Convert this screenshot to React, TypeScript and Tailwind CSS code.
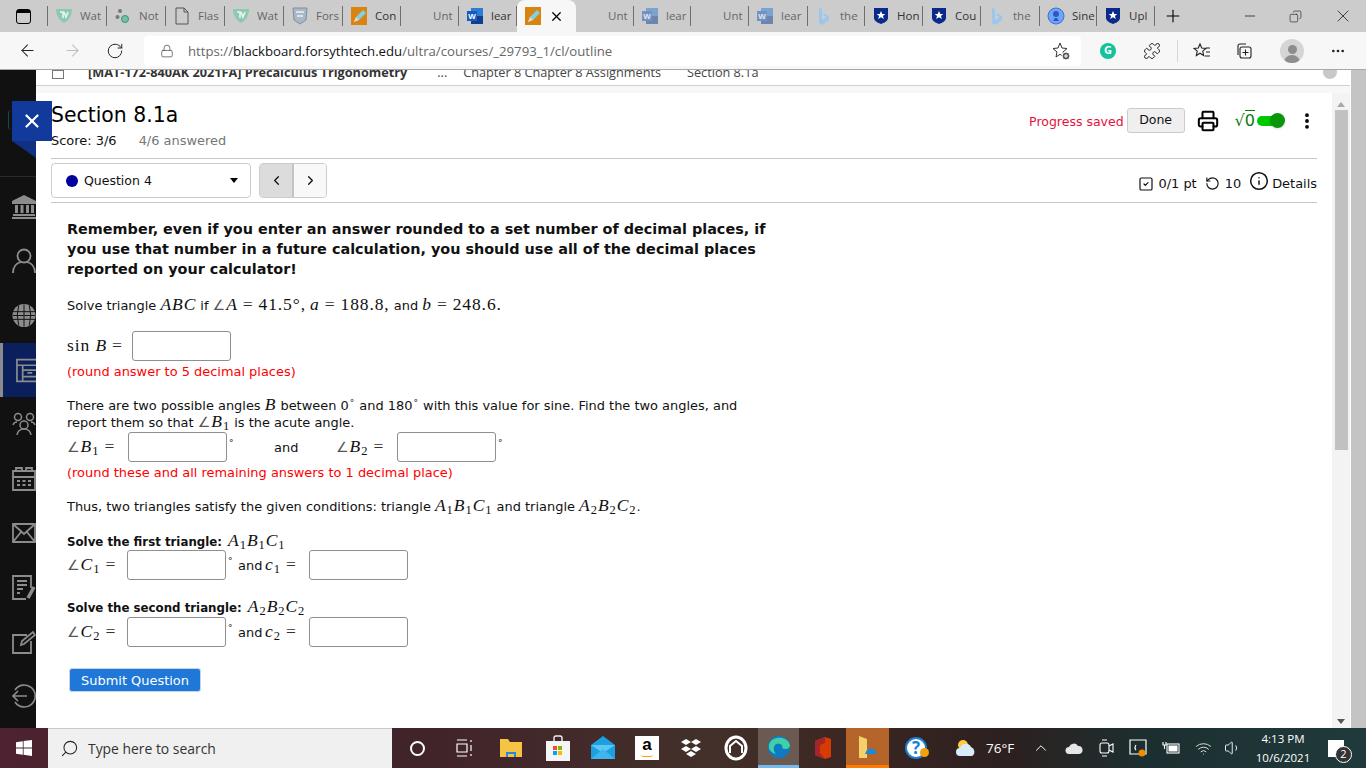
import { ReactNode } from 'react';
import {
  ArrowLeft, ArrowRight, RotateCw, Lock, Puzzle, MoreHorizontal, Plus, X, Minus, Copy,
  ChevronLeft, ChevronRight, Printer, MoreVertical, SquareCheck, RotateCcw, Info, Search, ChevronUp, Volume1, Wifi,
} from 'lucide-react';

const UI = { fontFamily: '"Open Sans", sans-serif' };
const BODY = { fontFamily: '"DejaVu Sans", sans-serif' };
const MATH = { fontFamily: '"Liberation Serif", serif' };

function Shield({ color = '#0a2a8a' }: { color?: string }) {
  return (
    <svg width="16" height="18" viewBox="0 0 16 18">
      <path d="M1 1h14v10c0 3-4 5-7 6-3-1-7-3-7-6z" fill={color} />
      <path d="M8 4l1.3 3h3l-2.4 2 1 3L8 10.200 5.100 12l1-3-2.400-2h3z" fill="#fff" />
    </svg>
  );
}

function PencilIcon() {
  return (
    <svg width="16" height="18" viewBox="0 0 16 18">
      <rect width="16" height="18" fill="#d98410" />
      <path d="M3 15l2-5 7-7 3 3-7 7z" fill="#7fd0e8" />
      <path d="M3 15l2-5 3 3z" fill="#f2d6b0" />
    </svg>
  );
}

function WordIcon({ faded }: { faded?: boolean }) {
  return (
    <svg width="16" height="18" viewBox="0 0 16 18" className={faded ? 'opacity-50' : ''}>
      <rect x="4" y="1" width="12" height="16" fill="#2b7cd3" />
      <rect x="4" y="9" width="12" height="8" fill="#103f91" />
      <rect x="0" y="4" width="10" height="10" fill="#185abd" />
      <text x="5" y="12" fontSize="8" fontWeight="700" textAnchor="middle" fill="#fff" fontFamily="Liberation Sans">W</text>
    </svg>
  );
}

function TvIcon() {
  return (
    <svg width="18" height="16" viewBox="0 0 18 16">
      <path d="M1 1h16c0 7-4 12-8 14C5 13 1 8 1 1z" fill="#8cc9ae" />
      <path d="M5 4h3v6M9 4l2 5 2-5" fill="none" stroke="#e8f5ee" strokeWidth="1.600" />
    </svg>
  );
}

function BingIcon() {
  return (
    <svg width="12" height="18" viewBox="0 0 12 18">
      <path d="M1 1l3 1v11l5-3-3-1-1-3 6 3v4l-7 5-3-2z" fill="#9cc6ea" />
    </svg>
  );
}

type TabDef = { label: string; icon?: ReactNode; w: string; dim?: boolean };

const blank = <span className="block h-[18px] w-4" />;

const tabs: TabDef[] = [
  { label: 'Wat', w: 'w-[59px]', icon: <TvIcon />, dim: true },
  {
    label: 'Not', w: 'w-[59px]', dim: true,
    icon: (
      <svg width="16" height="16" viewBox="0 0 16 16">
        <circle cx="5" cy="3" r="2" fill="#777" /><circle cx="2.500" cy="9" r="2" fill="#777" />
        <circle cx="10" cy="11" r="3.500" fill="#6cc3a8" stroke="#3f8f7a" />
      </svg>
    ),
  },
  {
    label: 'Flas', w: 'w-[59px]', dim: true,
    icon: (
      <svg width="14" height="18" viewBox="0 0 14 18" fill="none" stroke="#555" strokeWidth="1">
        <path d="M1 1h8l4 4v12H1zM9 1v4h4" />
      </svg>
    ),
  },
  { label: 'Wat', w: 'w-[59px]', icon: <TvIcon />, dim: true },
  {
    label: 'Fors', w: 'w-[59px]', dim: true,
    icon: (
      <svg width="16" height="18" viewBox="0 0 16 18">
        <path d="M1 1h14l-1 12-6 4-6-4z" fill="#a9b7c6" stroke="#7f8fa3" />
        <path d="M4 5h8M5 9h6" stroke="#eef2f6" strokeWidth="1.500" />
      </svg>
    ),
  },
  { label: 'Con', w: 'w-[58px]', icon: <PencilIcon /> },
  { label: 'Unt', w: 'w-[58px]', dim: true, icon: blank },
  { label: 'lear', w: 'w-[58px]', icon: <WordIcon /> },
];

const tabsAfter: TabDef[] = [
  { label: 'Unt', w: 'w-[58px]', dim: true, icon: blank },
  { label: 'lear', w: 'w-[57px]', dim: true, icon: <WordIcon faded /> },
  { label: 'Unt', w: 'w-[58px]', dim: true, icon: blank },
  { label: 'lear', w: 'w-[59px]', dim: true, icon: <WordIcon faded /> },
  { label: 'the', w: 'w-[57px]', dim: true, icon: <BingIcon /> },
  { label: 'Hon', w: 'w-[58px]', icon: <Shield /> },
  { label: 'Cou', w: 'w-[58px]', icon: <Shield /> },
  { label: 'the', w: 'w-[59px]', dim: true, icon: <BingIcon /> },
  {
    label: 'Sine', w: 'w-[57px]',
    icon: (
      <svg width="18" height="18" viewBox="0 0 18 18">
        <circle cx="9" cy="9" r="8" fill="#6ea5f5" stroke="#3f6fd8" />
        <circle cx="9" cy="7" r="3" fill="#2f55c8" /><path d="M6 14h6l-2-3H8z" fill="#2f55c8" />
      </svg>
    ),
  },
  { label: 'Upl', w: 'w-[58px]', icon: <Shield /> },
];

function Tab({ tab }: { tab: TabDef }) {
  return (
    <div className={`${tab.w} flex h-5 shrink-0 items-center gap-[7px] overflow-hidden border-r border-[#6f6f6f] pl-[7px]`}>
      <span className="flex w-[18px] shrink-0 justify-center">{tab.icon}</span>
      <span className={`text-[11.500px] whitespace-nowrap ${tab.dim ? 'text-[#666]' : 'text-[#333]'}`}>{tab.label}</span>
    </div>
  );
}

function BrowserChrome() {
  return (
    <div style={UI} className="shrink-0">
      <div className="flex h-8 items-center bg-[#cccccc]">
        <div className="flex w-[47px] shrink-0 justify-center pr-[1px]">
          <div className="h-[15px] w-[15px] rounded-[3px] border-[1.500px] border-black">
            <div className="h-[3px] bg-black" />
          </div>
        </div>
        <div className="flex h-5 items-center border-l border-[#6f6f6f]" />
        {tabs.map((t, i) => <Tab key={i} tab={t} />)}
        <div className="flex h-8 w-[59px] shrink-0 items-center justify-between self-start rounded-t-lg bg-[#f7f7f7] pl-2 pr-[12px]">
          <PencilIcon />
          <X size={15} strokeWidth={2} className="text-black" />
        </div>
        {tabsAfter.map((t, i) => <Tab key={i} tab={t} />)}
        <Plus size={20} strokeWidth={1.300} className="ml-[8px] text-black" />
        <div className="ml-auto flex items-center gap-[31px] pr-[13px] text-[#222]">
          <Minus size={16} strokeWidth={1.200} />
          <Copy size={13} strokeWidth={1.200} className="scale-x-[-1]" />
          <X size={20} strokeWidth={1} />
        </div>
      </div>

      <div className="flex h-[38px] items-center border-b border-[#a8a8a8] bg-[#f7f7f7]">
        <div className="flex w-[144px] shrink-0 items-center pl-[18px]">
          <ArrowLeft size={19} strokeWidth={1.300} className="text-[#222]" />
          <ArrowRight size={19} strokeWidth={1.300} className="ml-[26px] text-[#bdbdbd]" />
          <RotateCw size={18} strokeWidth={1.300} className="ml-[24px] text-[#222]" />
        </div>
        <div className="flex h-[30px] w-[937px] shrink-0 items-center rounded-[4px] bg-white pl-4 pr-[10px]">
          <Lock size={14} strokeWidth={1.200} className="text-[#444]" />
          <span className="ml-[14px] pt-[2px] text-[13.200px] text-[#666]">
            https://<span className="text-[#111]">blackboard.forsythtech.edu</span>/ultra/courses/_29793_1/cl/outline
          </span>
          <svg width="20" height="20" viewBox="0 0 20 20" className="ml-auto" fill="none" stroke="#333" strokeWidth="1">
            <path d="M9 2l2 5 5 .5-4 3.500 1 5-4-2.700-4 2.700 1-5-4-3.500 5-.5z" />
            <circle cx="15" cy="15" r="4" fill="#555" stroke="#fff" />
            <path d="M13 15h4M15 13v4" stroke="#fff" />
          </svg>
        </div>
        <div className="flex flex-1 items-center text-[#222]">
          <span className="ml-[19px] flex h-4 w-4 items-center justify-center rounded-full bg-[#15c39a] text-[11px] font-bold text-white">G</span>
          <Puzzle size={18} strokeWidth={1.300} className="ml-[27px]" />
          <div className="ml-[16px] h-[22px] w-px bg-[#d8d8d8]" />
          <svg width="18" height="18" viewBox="0 0 18 18" className="ml-[15px]" fill="none" stroke="#222" strokeWidth="1.100">
            <path d="M7 2l1.700 4 4.300.4-3.300 2.800 1 4.300L7 11.200 3.300 13.500l1-4.300L1 6.400 5.300 6zM13 6h4M13 10h4M12 14h5" />
          </svg>
          <svg width="18" height="18" viewBox="0 0 18 18" className="ml-[24px]" fill="none" stroke="#222" strokeWidth="1.100">
            <path d="M3 13V4q0-2 2-2h6" /><rect x="5" y="5" width="11" height="11" rx="2" /><path d="M10.500 7.500v6M7.500 10.500h6" />
          </svg>
          <span className="ml-[27px] flex h-[24px] w-[24px] flex-col items-center justify-end overflow-hidden rounded-full bg-[#d5d5d5]">
            <span className="h-[9px] w-[9px] rounded-full bg-[#8d8d8d]" />
            <span className="mt-[1px] h-[8px] w-[16px] rounded-t-full bg-[#8d8d8d]" />
          </span>
          <MoreHorizontal size={16} strokeWidth={2} className="ml-[26px]" />
        </div>
      </div>
    </div>
  );
}

const GRAY = '#8c8c8c';

const sideIcons: ReactNode[] = [
  <svg width="24" height="24" viewBox="0 0 24 24" fill={GRAY}>
    <path d="M12 0L0 6v3h24V6z" /><path d="M3 10h3v8H3zM8.500 10h3v8h-3zM14 10h3v8h-3zM19 10h3v8h-3zM1 19h22v2H1zM0 22h24v2H0z" />
  </svg>,
  <svg width="24" height="26" viewBox="0 0 24 26" fill="none" stroke={GRAY} strokeWidth="1.800">
    <circle cx="12" cy="8" r="6.500" /><path d="M1 25q0-9 8-11M23 25q0-9-8-11" />
  </svg>,
  <svg width="25" height="25" viewBox="0 0 25 25">
    <circle cx="12.500" cy="12.500" r="12" fill={GRAY} />
    <path d="M1 8.500h23M1 12.500h23M1 16.500h23M12.500 1v23M7 2q-3 10 0 21M18 2q3 10 0 21" fill="none" stroke="#111" strokeWidth="1" />
  </svg>,
  <svg width="21" height="25" viewBox="0 0 21 25" fill="none" stroke={GRAY} strokeWidth="1.800">
    <path d="M21 1H1v23h20M1 7h20M7 7v17M7 12h14M7 19h14M12 15h5" />
  </svg>,
  <svg width="24" height="24" viewBox="0 0 24 24" fill="none" stroke={GRAY} strokeWidth="1.500">
    <circle cx="6" cy="5" r="3.500" /><circle cx="18" cy="5" r="3.500" /><circle cx="12" cy="13" r="4" />
    <path d="M1 13q1-3 4-3M23 13q-1-3-4-3M5 23q1-6 7-6t7 6" />
  </svg>,
  <svg width="24" height="24" viewBox="0 0 24 24" fill="none" stroke={GRAY} strokeWidth="1.800">
    <path d="M1 4h22v19H1zM1 10h22M4 4V1h6v3M14 4V1h6v3" />
    <path d="M5 14h3M10.500 14h3M16 14h3M5 18h3M10.500 18h3M16 18h3" strokeWidth="2.200" />
  </svg>,
  <svg width="24" height="20" viewBox="0 0 24 20" fill="none" stroke={GRAY} strokeWidth="1.800">
    <path d="M1 1h22v18H1zM1 1l11 10L23 1M1 19l8-10M23 19l-8-10" />
  </svg>,
  <svg width="24" height="25" viewBox="0 0 24 25" fill="none" stroke={GRAY} strokeWidth="1.800">
    <path d="M19 13V1H1v23h13M5 6h10M5 10h10M5 14h6M5 18h3" />
    <path d="M16 23l6-11" strokeWidth="3.500" />
  </svg>,
  <svg width="24" height="24" viewBox="0 0 24 24" fill="none" stroke={GRAY} strokeWidth="1.800">
    <path d="M15 5H1v18h18V11" /><path d="M9 15l1-4 11-9 2 3-11 9z" />
  </svg>,
  <svg width="24" height="24" viewBox="0 0 24 24" fill="none" stroke={GRAY} strokeWidth="1.600">
    <path d="M3 6a11 11 0 1 1 0 12M1 12h14M6 7l-5 5 5 5" />
  </svg>,
];

function Sidebar() {
  return (
    <div className="flex w-[36px] shrink-0 flex-col overflow-hidden bg-[#111111] pt-[106px]">
      <div className="mb-[3px] h-px bg-[#2a2a2a]" />
      {sideIcons.map((r, i) => (
        <div
          key={i}
          className={`flex h-[54.300px] shrink-0 items-center ${i === 3 ? 'border-l-[3px] border-[#8c8c8c] bg-[#0b1f5c] pl-[13px]' : 'pl-[12px]'}`}
        >
          {r}
        </div>
      ))}
    </div>
  );
}

function V({ children }: { children: ReactNode }) {
  return <i style={MATH} className="text-[17.500px] leading-[10px] font-normal tracking-[0.9px]">{children}</i>;
}

function N({ children }: { children: ReactNode }) {
  return <span style={MATH} className="text-[17.500px] leading-[10px] font-normal tracking-[0.9px]">{children}</span>;
}

function Sb({ children }: { children: ReactNode }) {
  return <sub style={MATH} className="mr-[1px] text-[12.500px] leading-[0] font-normal">{children}</sub>;
}

function Eq({ children }: { children?: ReactNode }) {
  return (
    <span style={MATH} className="text-[17.500px] leading-[10px] font-normal tracking-[0.9px]">
      <span className="mx-[5px] text-[#333]">=</span>{children}
    </span>
  );
}

const Ang = () => <span style={BODY} className="mr-[1px] text-[14px] leading-[10px] font-normal text-[#555]">∠</span>;

function Box({ w = 'w-[99px]' }: { w?: string }) {
  return <input className={`${w} h-[30px] shrink-0 rounded-[3px] border border-[#8f8f8f] bg-white`} />;
}

function Deg({ w }: { w: string }) {
  return <span className={`${w} -mt-[8px] shrink-0 pl-[2px] text-[9px] leading-none`}>°</span>;
}

const SmallDeg = () => <sup className="mx-[1px] text-[9px] leading-[0]">°</sup>;

function Label({ w, children }: { w: string; children: ReactNode }) {
  return <span className={`${w} shrink-0 whitespace-nowrap`}>{children}</span>;
}

function MainPanel() {
  return (
    <div className="flex min-w-0 flex-1 flex-col bg-white">
      <div className="flex h-[16px] shrink-0 items-end overflow-hidden border-b border-[#cfcfcf] pb-[6px] pl-[16px] text-[12.700px] leading-none whitespace-nowrap text-[#444]" style={UI}>
        <span className="h-[9px] w-[12px] shrink-0 border border-[#777]" />
        <b className="ml-[24px] text-[#333]">[MAT-172-840AK 2021FA] Precalculus Trigonometry</b>
        <span className="ml-[30px]">...</span>
        <span className="ml-[16px]">Chapter 8 Chapter 8 Assignments</span>
        <span className="ml-[26px]">Section 8.1a</span>
        <span className="ml-auto mr-[13px] h-[14px] w-[14px] shrink-0 rounded-full bg-[#c8c8c8]" />
      </div>
      <div className="h-[7px] shrink-0 bg-[#f7f7f7]" />

      <div className="flex min-h-0 flex-1">
        <div style={BODY} className="w-[1281px] shrink-0 pl-[15px] text-[#111]">
          <div className="flex h-[66px] items-start justify-between border-b border-[#c8c8c8]">
            <div>
              <h1 className="mt-[9px] text-[20.400px] leading-[26px] font-normal text-black">Section 8.1a</h1>
              <div className="mt-[5px] text-[12.950px] leading-4">
                Score: 3/6 <span className="ml-[18px] text-[#777]">4/6 answered</span>
              </div>
            </div>
            <div className="mt-[15px] flex items-center">
              <span className="pt-[3px] text-[12.500px] text-[#e5103a]">Progress saved</span>
              <button className="ml-[3px] h-[25px] w-[58px] rounded-[3px] border border-[#ccc] bg-[#efefef] text-[12.500px]">Done</button>
              <Printer size={22} strokeWidth={2.200} className="ml-[12px] text-black" />
              <span className="ml-[16px] text-[16px] leading-none text-[#0a7a0a]">√<span className="border-t border-[#0a7a0a]">0</span></span>
              <span className="ml-[2px] flex items-center">
                <span className="h-[10px] w-[23px] rounded-full bg-[#00c800]" />
                <span className="-ml-[10px] h-[15px] w-[15px] rounded-full bg-[#0a960a] shadow" />
              </span>
              <MoreVertical size={20} strokeWidth={2.600} className="ml-[12px] text-black" />
            </div>
          </div>

          <div className="flex h-[44px] items-center justify-between border-b border-[#c8c8c8]">
            <div className="flex items-center">
              <div className="flex h-[35px] w-[200px] items-center rounded-[4px] border border-[#ccc] pl-[14px] pr-[12px] text-[12.500px]">
                <span className="mr-[6px] h-3 w-3 rounded-full bg-[#00009c]" />
                <span className="pt-[2px]">Question 4</span>
                <span className="ml-auto h-0 w-0 border-x-[4px] border-t-[5px] border-x-transparent border-t-black" />
              </div>
              <div className="ml-2 flex h-[35px] w-[68px] overflow-hidden rounded-[4px] border border-[#ccc]">
                <span className="flex w-[34px] items-center justify-center border-r-2 border-[#c4c4c4] bg-[#dcdcdc]"><ChevronLeft size={15} strokeWidth={2} /></span>
                <span className="flex flex-1 items-center justify-center bg-[#f8f8f8]"><ChevronRight size={15} strokeWidth={2} /></span>
              </div>
            </div>
            <div className="flex items-center pt-[6px] text-[12.950px]">
              <SquareCheck size={16} strokeWidth={1.800} className="mr-[4px]" />
              <span>0/1 pt</span>
              <RotateCcw size={15} strokeWidth={1.800} className="ml-[8px] mr-[5px]" />
              <span>10</span>
              <Info size={20} strokeWidth={1.800} className="ml-[8px] mr-[3px] -translate-y-[3px]" />
              <span>Details</span>
            </div>
          </div>

          <div className="pl-[16px] text-[12.950px] leading-[17px]">
            <p className="mt-[16px] w-[708px] text-[14.400px] leading-[20px] font-bold">
              Remember, even if you enter an answer rounded to a set number of decimal places, if you use that number in a future calculation, you should use all of the decimal places reported on your calculator!
            </p>
            <p className="mt-[18px]">
              Solve triangle <V>ABC</V> if <Ang /><V>A</V><Eq>41.5°,</Eq> <V>a</V><Eq>188.8,</Eq> and <V>b</V><Eq>248.6.</Eq>
            </p>
            <div className="mt-[17px] flex h-[30px] items-center">
              <Label w="w-[65px]"><N>sin </N><V>B</V><Eq /></Label>
              <Box />
            </div>
            <p className="mt-[2px] text-[#ff0000]">(round answer to 5 decimal places)</p>
            <p className="mt-[17px] w-[690px]">
              There are two possible angles <V>B</V> between 0<SmallDeg /> and 180<SmallDeg /> with this value for sine. Find the two angles, and report them so that <Ang /><V>B</V><Sb>1</Sb> is the acute angle.
            </p>
            <div className="mt-[1px] flex h-[30px] items-center">
              <Label w="w-[61px]"><Ang /><V>B</V><Sb>1</Sb><Eq /></Label>
              <Box />
              <Deg w="w-[47px]" />
              <Label w="w-[62px]">and</Label>
              <Label w="w-[61px]"><Ang /><V>B</V><Sb>2</Sb><Eq /></Label>
              <Box />
              <Deg w="w-[8px]" />
            </div>
            <p className="mt-[2px] text-[#ff0000]">(round these and all remaining answers to 1 decimal place)</p>
            <p className="mt-[17px]">
              Thus, two triangles satisfy the given conditions: triangle <V>A</V><Sb>1</Sb><V>B</V><Sb>1</Sb><V>C</V><Sb>1</Sb> and triangle <V>A</V><Sb>2</Sb><V>B</V><Sb>2</Sb><V>C</V><Sb>2</Sb>.
            </p>
            <p className="mt-[19px] text-[11.800px] font-bold">Solve the first triangle: <span className="ml-[2px]"><V>A</V><Sb>1</Sb><V>B</V><Sb>1</Sb><V>C</V><Sb>1</Sb></span></p>
            <div className="-mt-[1px] flex h-[30px] items-center">
              <Label w="w-[60px]"><Ang /><V>C</V><Sb>1</Sb><Eq /></Label>
              <Box />
              <Deg w="w-[12px]" />
              <Label w="w-[27px]">and</Label>
              <Label w="w-[44px]"><V>c</V><Sb>1</Sb><Eq /></Label>
              <Box />
            </div>
            <p className="mt-[20px] text-[11.800px] font-bold">Solve the second triangle: <span className="ml-[2px]"><V>A</V><Sb>2</Sb><V>B</V><Sb>2</Sb><V>C</V><Sb>2</Sb></span></p>
            <div className="flex h-[30px] items-center">
              <Label w="w-[60px]"><Ang /><V>C</V><Sb>2</Sb><Eq /></Label>
              <Box />
              <Deg w="w-[12px]" />
              <Label w="w-[27px]">and</Label>
              <Label w="w-[44px]"><V>c</V><Sb>2</Sb><Eq /></Label>
              <Box />
            </div>
            <button className="mt-[21px] ml-[2px] h-[24px] w-[132px] rounded-[3px] border border-[#c4d4ea] bg-[#1f78d8] text-[12.950px] text-white">Submit Question</button>
          </div>
        </div>

        <div className="w-[15px] shrink-0" />
        <div className="flex w-[18px] shrink-0 flex-col items-center bg-[#f3f3f3] pt-[9px]">
          <span className="h-0 w-0 border-x-[4px] border-b-[5px] border-x-transparent border-b-[#a8a8a8]" />
          <span className="mt-[3px] h-[340px] w-[13px] bg-[#c1c1c1]" />
          <span className="mt-auto mb-[4px] h-0 w-0 border-x-[4px] border-t-[5px] border-x-transparent border-t-[#555]" />
        </div>
      </div>
    </div>
  );
}

function Slot({ w, children, bg }: { w: string; children?: ReactNode; bg?: string }) {
  return <div className={`${w} ${bg ?? ''} flex h-10 shrink-0 items-center justify-center`}>{children}</div>;
}

function Taskbar() {
  return (
    <div style={UI} className="flex h-10 shrink-0 items-center bg-[linear-gradient(90deg,#4e2230_0%,#41232a_30%,#43302a_52%,#3b2622_62%,#2c2020_74%,#1c2f30_84%,#203a3c_100%)] text-white">
      <Slot w="w-12">
        <svg width="16" height="16" viewBox="0 0 16 16" fill="#fff">
          <path d="M0 2.200l6.800-1v6.300H0zM7.600 1.100L16 0v7.500H7.600zM0 8.400h6.800v6.400l-6.800-1zM7.600 8.400H16V16l-8.400-1.200z" />
        </svg>
      </Slot>
      <div className="flex h-10 w-[344px] shrink-0 items-center border-t border-[#c9c9c9] bg-[#f0f0f0] pl-[12px] text-[13.900px] text-[#333]">
        <Search size={19} strokeWidth={1.300} className="scale-x-[-1] text-[#222]" />
        <span className="ml-[9px] pt-[2px]">Type here to search</span>
      </div>
      <Slot w="w-[50px]"><span className="h-[15px] w-[15px] rounded-full border-[2.500px] border-white" /></Slot>
      <Slot w="w-[44px]">
        <svg width="16" height="18" viewBox="0 0 16 18" fill="none" stroke="#fff" strokeWidth="1.200">
          <path d="M1 1h10M1 17h10M1 5h10v8H1zM15 1v2M15 6v6M15 15v2" />
        </svg>
      </Slot>
      <Slot w="w-[50px]">
        <svg width="22" height="20" viewBox="0 0 22 20">
          <path d="M0 1h8l2 3h12v15H0z" fill="#f6c344" /><path d="M6 14h10v5h-2v-3H8v3H6z" fill="#2b88d8" />
        </svg>
      </Slot>
      <Slot w="w-[44px]">
        <svg width="24" height="26" viewBox="0 0 24 26">
          <path d="M8 7V3q0-2 2-2h4q2 0 2 2v4" fill="none" stroke="#eee" strokeWidth="1.400" />
          <rect y="6" width="24" height="20" fill="#f5f5f5" />
          <rect x="7" y="11" width="4" height="4" fill="#f25022" /><rect x="12" y="11" width="4" height="4" fill="#7fba00" />
          <rect x="7" y="16" width="4" height="4" fill="#00a4ef" /><rect x="12" y="16" width="4" height="4" fill="#ffb900" />
        </svg>
      </Slot>
      <Slot w="w-[46px]">
        <svg width="24" height="24" viewBox="0 0 24 24">
          <path d="M0 9L12 0l12 9v14H0z" fill="#1ba1e2" /><path d="M0 9l12 8 12-8z" fill="#5cc8f5" /><path d="M0 23l12-10 12 10z" fill="#3fb4ee" />
        </svg>
      </Slot>
      <Slot w="w-[42px]">
        <div className="flex h-[24px] w-[24px] flex-col items-center bg-white text-black" style={{ fontFamily: '"Liberation Sans", sans-serif' }}>
          <span className="text-[17px] leading-[18px] font-bold">a</span>
          <span className="h-[3px] w-[12px] rounded-b-full border-b border-[#f90]" />
        </div>
      </Slot>
      <Slot w="w-[46px]">
        <svg width="22" height="20" viewBox="0 0 22 20" fill="#fff">
          <path d="M6 1l5 3-5 3-5-3zM16 1l5 3-5 3-5-3zM6 8l5 3-5 3-5-3zM16 8l5 3-5 3-5-3zM11 13l5 3-5 3-5-3z" />
        </svg>
      </Slot>
      <Slot w="w-[44px]">
        <svg width="24" height="26" viewBox="0 0 24 26" fill="none" stroke="#fff" strokeWidth="3">
          <ellipse cx="12" cy="13" rx="10" ry="11" /><path d="M6 18V11l6-5 6 5v7" strokeWidth="2" />
        </svg>
      </Slot>
      <Slot w="w-[41px]" bg="bg-[#6a5a52] border-b-[3px] border-[#76b9ed]">
        <svg width="24" height="24" viewBox="0 0 24 24">
          <circle cx="12" cy="12" r="11" fill="#0f7ac4" /><path d="M2 10C4 1 20 0 23 10c0 4-5 5-8 3 2-2-2-6-6-4-3 2-3 7 0 10-4-1-8-4-7-9z" fill="#3fd0a8" />
        </svg>
      </Slot>
      <Slot w="w-[47px]">
        <svg width="18" height="24" viewBox="0 0 18 24">
          <path d="M1 5l10-4 6 2v18l-6 2-10-4z" fill="#d83b01" /><path d="M1 5l10-4v6L6 9v8l5 6-10-4z" fill="#a4262c" />
        </svg>
      </Slot>
      <Slot w="w-[43px]" bg="bg-[#b5642a] border-b-[3px] border-[#ff7a00]">
        <svg width="22" height="26" viewBox="0 0 22 26">
          <path d="M2 2l8 3v19H2z" fill="#f6d06a" /><path d="M8 20q2-6 6-5 4-1 6 5z" fill="#1e88d8" />
        </svg>
      </Slot>
      <Slot w="w-[54px]">
        <span className="relative flex h-[22px] w-[22px] items-center justify-center rounded-full border-[2px] border-[#1a7fd6] bg-white text-[17px] font-bold text-[#1a7fd6]">
          ?
          <span className="absolute -right-[4px] bottom-0 h-[9px] w-[9px] rounded-full bg-[#f2a20c]" />
        </span>
      </Slot>
      <Slot w="w-[46px]">
        <svg width="22" height="18" viewBox="0 0 22 18">
          <circle cx="8" cy="6" r="5" fill="#ffc83d" /><path d="M5 17a4 4 0 0 1 0-8 6 6 0 0 1 11-1 5 5 0 0 1 1 9z" fill="#d8ecfa" />
        </svg>
      </Slot>
      <span className="-ml-[3px] w-[38px] shrink-0 text-[13.500px]">76°F</span>
      <Slot w="w-[34px]"><ChevronUp size={18} strokeWidth={1.300} /></Slot>
      <Slot w="w-[31px]">
        <svg width="18" height="12" viewBox="0 0 18 12"><path d="M4 12a3 3 0 0 1 0-7 5 5 0 0 1 9-1 4 4 0 0 1 1 8z" fill="#e6e6e6" /></svg>
      </Slot>
      <Slot w="w-[33px]">
        <svg width="16" height="18" viewBox="0 0 16 18" fill="none" stroke="#fff" strokeWidth="1.100">
          <rect x="2" y="4" width="9" height="10" rx="2" /><path d="M11 7l4-2v8l-4-2M4 1h5M4 17h5" />
        </svg>
      </Slot>
      <Slot w="w-[32px]">
        <svg width="18" height="18" viewBox="0 0 18 18" fill="none" stroke="#fff" strokeWidth="1.200">
          <path d="M1 1h16v14H1zM7 6q-2 3 0 5" /><circle cx="13" cy="14" r="3.500" fill="#f28a00" stroke="none" />
        </svg>
      </Slot>
      <Slot w="w-[33px]">
        <svg width="18" height="14" viewBox="0 0 18 14" fill="none" stroke="#fff" strokeWidth="1.100">
          <rect x="5" y="3" width="12" height="9" /><rect x="7" y="5" width="8" height="5" fill="#fff" /><path d="M1 1v3h3V1M2.500 4v4" />
        </svg>
      </Slot>
      <Slot w="w-[33px]"><Wifi size={17} strokeWidth={1.400} className="text-[#ddd]" /></Slot>
      <Slot w="w-[26px]"><Volume1 size={18} strokeWidth={1.200} /></Slot>
      <div className="ml-[2px] w-[70px] shrink-0 text-center text-[11.500px] leading-[19px]">
        <div>4:13 PM</div>
        <div>10/6/2021</div>
      </div>
      <Slot w="w-[36px]">
        <span className="relative block h-[17px] w-[16px] bg-white">
          <span className="absolute -right-[8px] -bottom-[6px] flex h-[17px] w-[17px] items-center justify-center rounded-full border border-white bg-[#333] text-[11px] text-white">2</span>
        </span>
      </Slot>
    </div>
  );
}

export default function App() {
  return (
    <div className="relative flex h-[768px] w-[1366px] flex-col overflow-hidden bg-white">
      <BrowserChrome />
      <div className="relative flex min-h-0 flex-1">
        <Sidebar />
        <MainPanel />
        <div className="w-[16px] shrink-0 border-l border-white bg-[#c4c4c4]" />
        <div className="absolute top-[40px] left-[8px] h-[20px] w-[4px] rounded-l-sm border-l border-[#1b4a48]" />
        <div className="absolute top-[31px] left-[12px] flex h-10 w-10 items-center justify-center bg-[#123a9c]">
          <X size={22} strokeWidth={2.400} className="text-white" />
        </div>
        <div className="absolute top-[71px] left-[12px] h-0 w-0 border-t-[17px] border-l-[24px] border-t-[#123080] border-l-transparent" />
      </div>
      <Taskbar />
    </div>
  );
}
